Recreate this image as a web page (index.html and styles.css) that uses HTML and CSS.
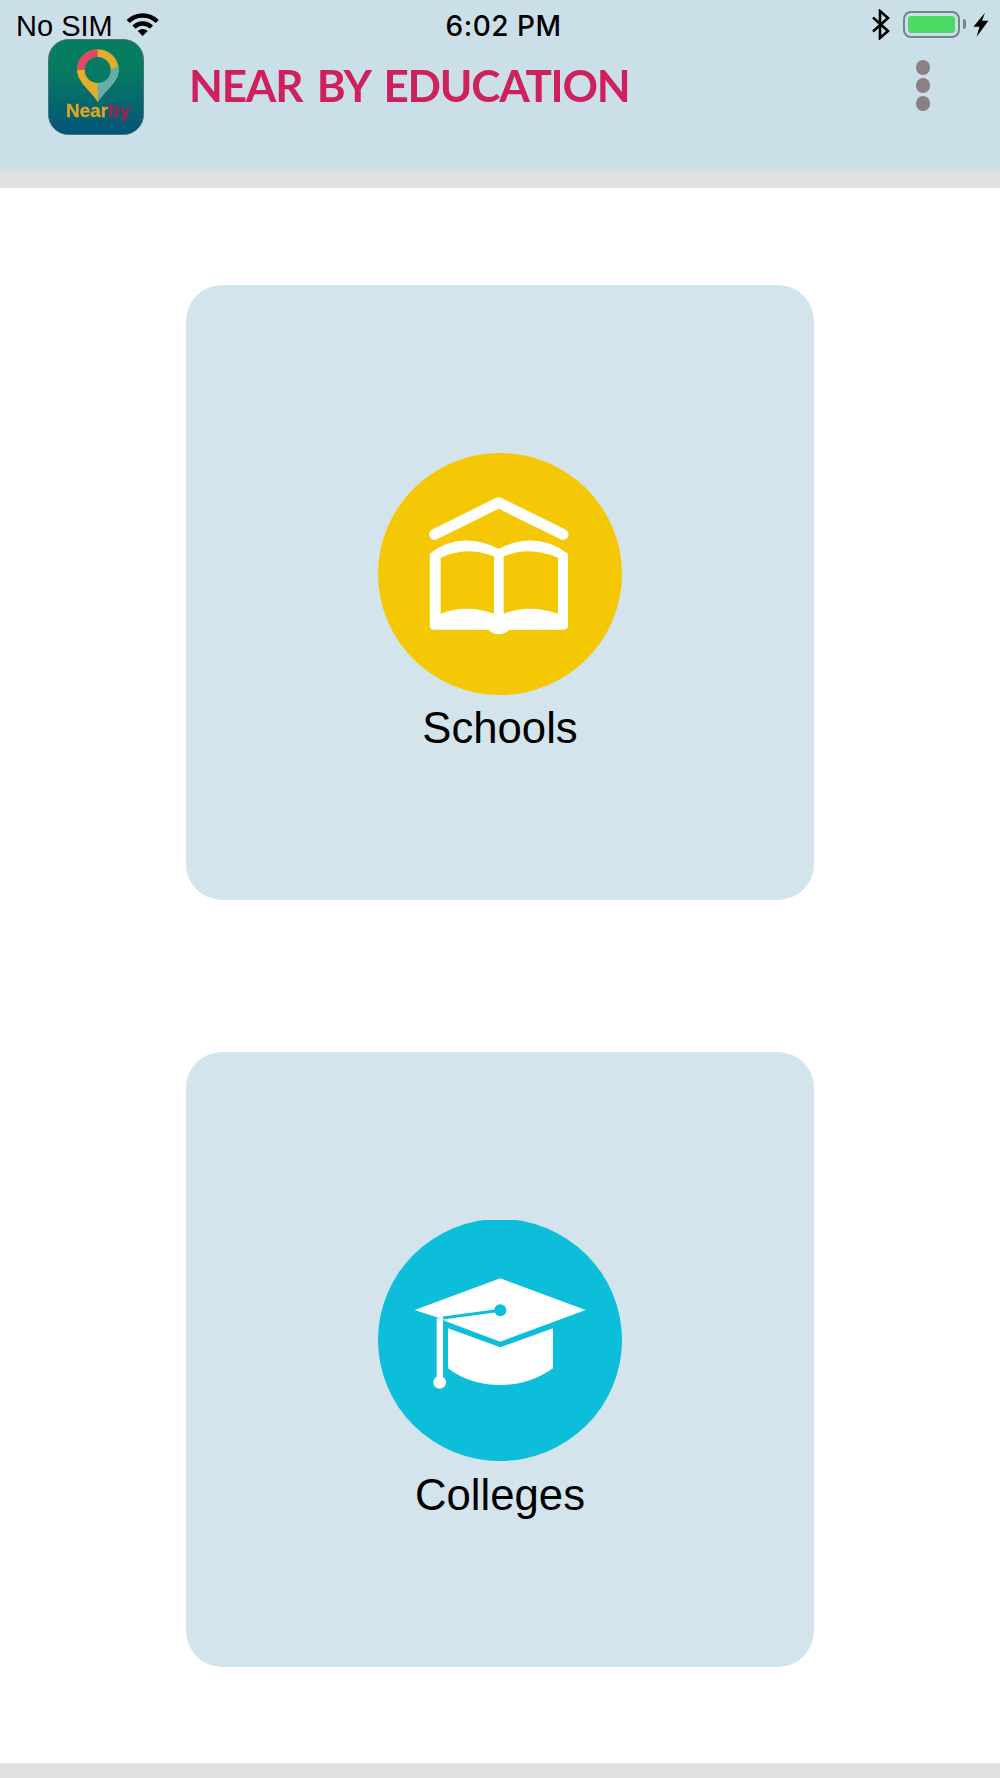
FILE: index.html
```html
<!DOCTYPE html>
<html lang="en">
<head>
<meta charset="utf-8">
<title>Near By Education</title>
<link rel="stylesheet" href="styles.css">
</head>
<body>
<div class="page">
  <header class="header">
    <div class="status">
      <div class="status-left">
        <span class="carrier">No SIM</span>
        <svg class="wifi" viewBox="126 12 34 25"><path class="wifi-arc" d="M128.2 21.5A20.5 20.5 0 0 1 157.2 21.5"/><path class="wifi-arc" d="M133.9 27.2A12.5 12.5 0 0 1 151.5 27.2"/><path class="wifi-tip" d="M142.7 36L137.7 31A7 7 0 0 1 147.7 31Z"/></svg>
      </div>
      <div class="time">6:02 PM</div>
      <div class="status-right">
        <svg class="bt" viewBox="870 9 21 31"><path d="M873 17.5L888 31L880 38V11L888 18L873 31.500"/></svg>
        <div class="battery"><div class="battery-level"></div></div>
        <div class="battery-nub"></div>
        <svg class="bolt" viewBox="972 11 18 27"><path d="M985 12.700L973.400 26.700H979.400L976.700 36.700L988.400 20.700H982L985 12.700Z"/></svg>
      </div>
    </div>
    <div class="nav">
      <svg class="logo" viewBox="48 39 96 96">
        <defs>
          <linearGradient id="logoBg" x1="0" y1="0" x2="0" y2="1">
            <stop offset="0.3" stop-color="#067d60"/>
            <stop offset="1" stop-color="#045479"/>
          </linearGradient>
          <clipPath id="pinClip"><path d="M97.700 102C91 91 77 82 77 70A20.700 20.700 0 0 1 118.700 70C118.700 82 104.500 91 97.700 102Z"/></clipPath>
        </defs>
        <rect x="48.500" y="39.500" width="95" height="95" rx="20" fill="url(#logoBg)" stroke="#4d7079"/>
        <g clip-path="url(#pinClip)">
          <rect x="70" y="45" width="55" height="60" fill="#e3ae2c"/>
          <path d="M97.700 45V62L84 70H70V45Z" fill="#df4a63"/>
          <path d="M97.700 102V78L110 70L125 62V102Z" fill="#66afa8"/>
        </g>
        <circle cx="97.700" cy="70" r="13" fill="#067a64"/>
        <text class="logo-text" x="66" y="117">Near<tspan class="logo-by">by</tspan></text>
      </svg>
      <h1 class="title">NEAR BY EDUCATION</h1>
      <div class="menu"><span class="dot"></span><span class="dot"></span><span class="dot"></span></div>
    </div>
  </header>
  <div class="band"></div>
  <main class="main">
    <a class="card">
      <svg class="icon" viewBox="55 68 732 732">
        <ellipse cx="421" cy="431" rx="366" ry="363" fill="#f5c806"/>
        <path class="roof" d="M225 312L417 217L610 312"/>
        <path class="white" d="M210 370Q300 300 417 355Q530 300 625 370V585Q625 598 612 598H450Q417 625 385 598H222Q210 598 210 585Z"/>
        <path fill="#f5c806" d="M243 382Q320 345 403 378V550Q320 520 243 550Z"/>
        <path fill="#f5c806" d="M432 378Q510 345 595 382V550Q510 520 432 550Z"/>
      </svg>
      <span class="label">Schools</span>
    </a>
    <a class="card">
      <svg class="icon" viewBox="55 60 732 732">
        <ellipse cx="421" cy="420" rx="366" ry="363" fill="#0dbedb"/>
        <path class="white" d="M165 330L422 235L678 330L422 425L262 365L240 355Z"/>
        <path class="tassel-cord" d="M422 331L250 354"/>
        <circle cx="422" cy="331" r="18" fill="#0dbedb"/>
        <rect class="white" x="231" y="355" width="19" height="185"/>
        <circle class="white" cx="240" cy="547" r="19"/>
        <path class="white" d="M265 385L422 442L580 385V505Q510 555 422 555Q330 555 265 505Z"/>
      </svg>
      <span class="label">Colleges</span>
    </a>
  </main>
  <footer class="footer"></footer>
</div>
</body>
</html>
```
FILE: styles.css
```css
* { box-sizing: border-box; }
html, body { margin: 0; padding: 0; background: #fff; }
.page { width: 1000px; height: 1778px; display: flex; flex-direction: column; font-family: "Liberation Sans", Arial, sans-serif; color: #000; }

.header { height: 169px; background: #cbdfe9; flex: none; }
.status { height: 39px; display: grid; grid-template-columns: 1fr auto 1fr; align-items: start; }
.status-left { display: flex; align-items: flex-start; padding: 10px 0 0 16px; }
.carrier { font-size: 29px; line-height: 32px; }
.wifi { width: 34px; height: 25px; margin: 2px 0 0 13px; }
.wifi-arc { fill: none; stroke: #000; stroke-width: 4.500; }
.wifi-tip { fill: #000; }
.time { font-family: Inter, "Liberation Sans", sans-serif; font-size: 28px; font-weight: 500; line-height: 32px; padding: 10px 0 0 7px; letter-spacing: 0.5px; }
.status-right { display: flex; justify-content: flex-end; align-items: flex-start; padding: 9px 10px 0 0; }
.bt { width: 21px; height: 31px; margin-right: 12px; fill: none; stroke: #000; stroke-width: 2.600; }
.battery { width: 57px; height: 27px; margin-top: 2px; padding: 3px; border: 2px solid #73858f; border-radius: 8px; }
.battery-level { height: 100%; background: #4cd964; border-radius: 3px; }
.battery-nub { width: 3px; height: 10px; margin: 10px 6px 0 3px; background: #73858f; border-radius: 0 3px 3px 0; }
.bolt { width: 18px; height: 27px; margin-top: 2px; fill: #000; }

.nav { height: 130px; display: flex; align-items: flex-start; padding-left: 48px; }
.logo { width: 96px; height: 96px; flex: none; filter: blur(0.5px); }
.logo-text { font-family: "Liberation Sans", sans-serif; font-weight: 700; font-size: 19px; fill: #e0a622; stroke: #e0a622; stroke-width: 0.3px; }
.logo-by { fill: #a8214e; stroke: #a8214e; }
.title { margin: 19px 0 0 45px; font-family: Lato, sans-serif; font-size: 44px; line-height: 54px; font-weight: 700; letter-spacing: -1.2px; word-spacing: 5px; color: #cd205c; white-space: nowrap; filter: blur(0.3px); }
.menu { margin: 21px 70px 0 auto; display: flex; flex-direction: column; gap: 3.500px; filter: blur(0.6px); }
.dot { width: 14.500px; height: 14.500px; border-radius: 50%; background: #8b8185; }

.band { height: 19px; flex: none; background: #e0e0e0; }
.main { flex: 1; display: flex; flex-direction: column; align-items: center; gap: 152px; padding-top: 97px; }
.card { width: 628px; height: 615px; flex: none; display: flex; flex-direction: column; align-items: center; padding-top: 168px; background: #d4e4ed; border-radius: 36px; }
.icon { width: 244px; height: 244px; display: block; filter: blur(0.4px); }
.white { fill: #fff; }
.roof { fill: none; stroke: #fff; stroke-width: 33; stroke-linecap: round; stroke-linejoin: round; }
.tassel-cord { stroke: #0dbedb; stroke-width: 9; }
.label { font-size: 43.700px; line-height: 50px; margin-top: 6px; }

.footer { height: 15px; flex: none; background: #e0e0e0; border-top: 1px solid #e8e8e8; }
```
